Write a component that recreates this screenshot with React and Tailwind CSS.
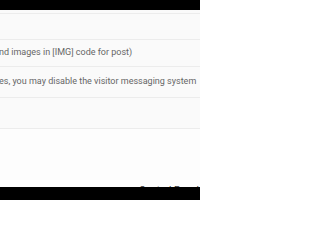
export default function App() {
  const font = { fontFamily: 'Roboto, "Liberation Sans", sans-serif' }
  return (
    <div className="flex h-[200px] w-[200px] flex-col overflow-hidden bg-white" style={font}>
      <div className="h-[10px] shrink-0 bg-black" />
      <div className="h-[3px] shrink-0 bg-[#fafafa]" />
      <div className="flex flex-col border-t border-[#ececec] bg-[#fafafa]">
        <div className="h-[26px] border-b border-[#ececec]" />
        <div className="flex h-[27px] items-center whitespace-nowrap border-b border-[#ececec] text-[9px] text-[#666]">
          <span className="-ml-[1px]">nd images in [IMG] code for post)</span>
        </div>
        <div className="flex h-[31px] items-center whitespace-nowrap border-b border-[#ececec] text-[9px] text-[#666]">
          <span className="-ml-[1px]">es, you may disable the visitor messaging system</span>
        </div>
        <div className="h-[31px] border-b border-[#ececec]" />
      </div>
      <div className="relative flex-1 bg-[#fdfdfd]">
        <span className="absolute left-[139px] top-[54px] text-[10px] text-[#333]">Control Panel</span>
      </div>
      <div className="relative z-10 h-[13px] shrink-0 bg-black" />
    </div>
  )
}
